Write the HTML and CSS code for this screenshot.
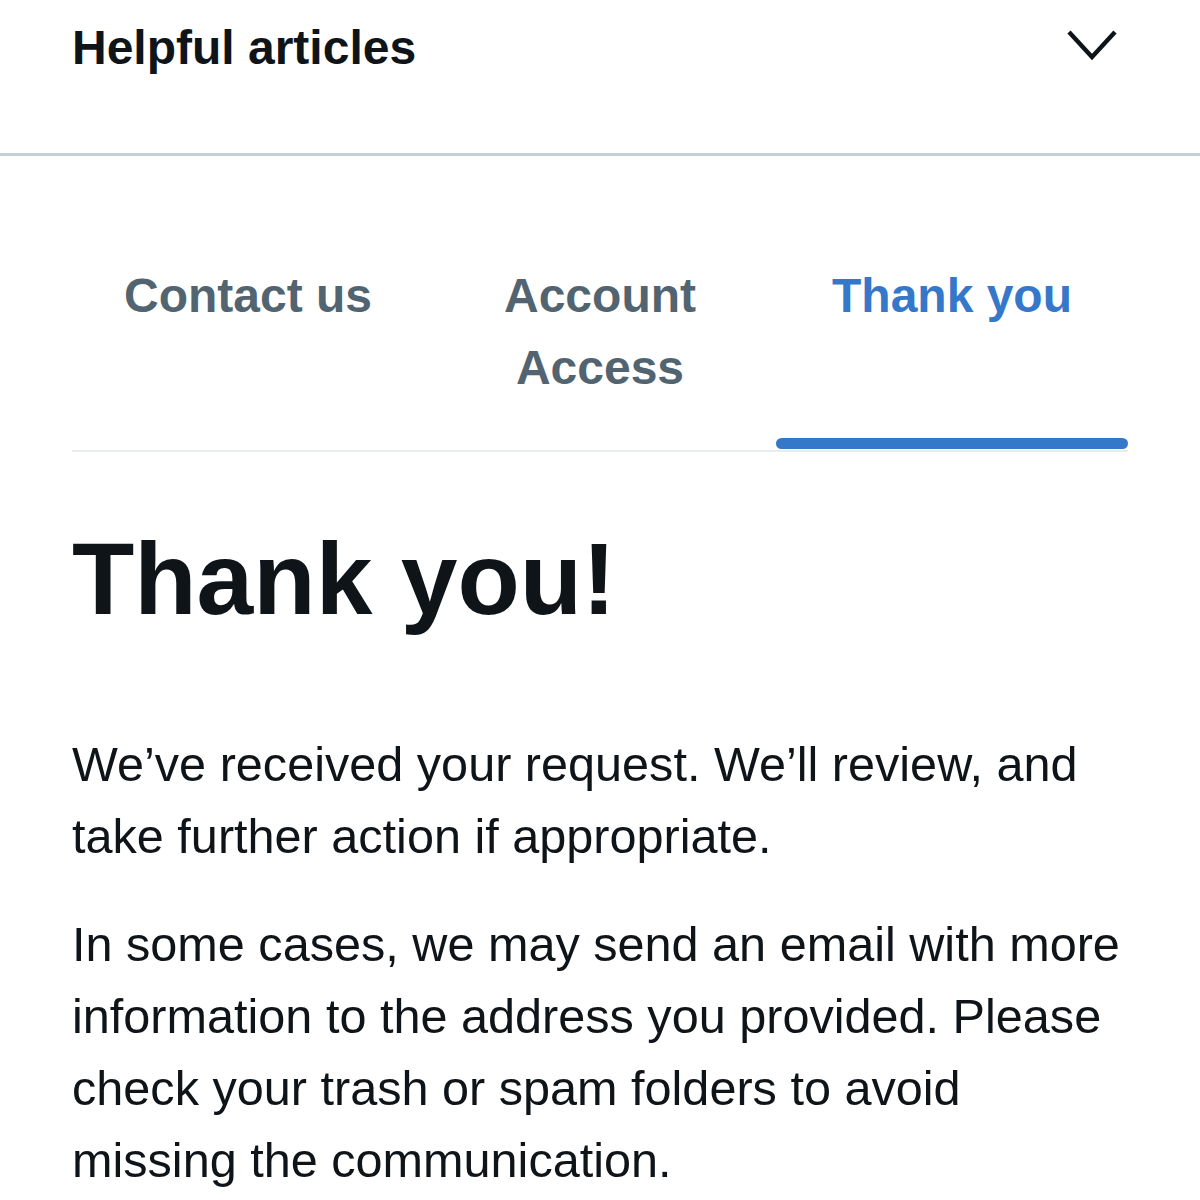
FILE: index.html
```html
<!DOCTYPE html>
<html>
<head>
<meta charset="utf-8">
<link rel="stylesheet" href="styles.css">
</head>
<body>
<header class="header">
  <h2 class="header-title">Helpful articles</h2>
  <svg class="chevron" width="52" height="34" viewBox="0 0 52 34"><polyline points="3,4 26,29 49,4" fill="none" stroke="#0f1419" stroke-width="4.4" stroke-linejoin="miter"/></svg>
</header>
<main class="main">
  <nav class="tabs">
    <div class="tab">Contact us</div>
    <div class="tab">Account Access</div>
    <div class="tab active">Thank you</div>
  </nav>
  <h1 class="title">Thank you!</h1>
  <p class="text">We’ve received your request. We’ll review, and take further action if appropriate.</p>
  <p class="text">In some cases, we may send an email with more information to the address you provided. Please check your trash or spam folders to avoid missing the communication.</p>
</main>
</body>
</html>
```
FILE: styles.css
```css
html, body {
  margin: 0;
  padding: 0;
  background: #ffffff;
  font-family: "Liberation Sans", Arial, sans-serif;
  color: #0f1419;
}
.header {
  display: flex;
  justify-content: space-between;
  align-items: flex-start;
  padding: 20px 82px 0 72px;
  height: 133px;
  border-bottom: 3px solid #c4cfd6;
}
.header-title {
  margin: 0;
  font-size: 48px;
  line-height: 56px;
  font-weight: 700;
}
.chevron {
  margin-top: 8px;
  display: block;
}
.main {
  padding: 0 72px;
}
.tabs {
  display: grid;
  grid-template-columns: 1fr 1fr 1fr;
  margin-top: 104px;
  border-bottom: 2px solid #e6ecf0;
}
.tab {
  text-align: center;
  font-size: 48px;
  line-height: 72px;
  font-weight: 700;
  color: #536471;
  padding: 0 40px 46px;
  position: relative;
}
.tab.active {
  color: #3577c9;
}
.tab.active::after {
  content: "";
  position: absolute;
  left: 0;
  right: 0;
  bottom: 1px;
  height: 11px;
  border-radius: 6px;
  background: #3577c9;
}
.title {
  margin: 67px 0 0;
  font-size: 102px;
  line-height: 120px;
  font-weight: 700;
}
.text {
  margin: 89px 0 0;
  font-size: 48.6px;
  line-height: 72px;
  font-weight: 400;
}
.text + .text {
  margin-top: 36px;
}
```
